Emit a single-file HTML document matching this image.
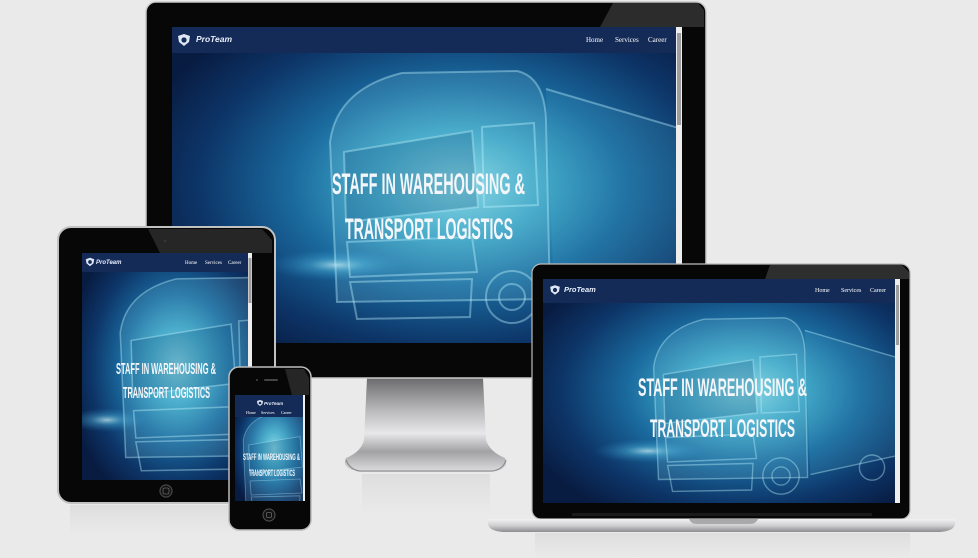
<!DOCTYPE html>
<html><head><meta charset="utf-8"><style>
html,body{margin:0;padding:0;background:#eaeaea;}
svg{display:block;}
text{font-family:"Liberation Sans Narrow","Liberation Sans",sans-serif;}
.nav{font-family:"Liberation Serif",serif;fill:#fff;}
.logo{font-family:"Liberation Sans",sans-serif;font-style:italic;font-weight:bold;fill:#e8eefc;}
.hero{font-weight:bold;fill:#f4f6fa;}
</style></head><body>
<svg width="978" height="558" viewBox="0 0 978 558" xmlns="http://www.w3.org/2000/svg">
<defs>
 <radialGradient id="hero" cx="0.56" cy="0.5" r="0.65">
  <stop offset="0" stop-color="#86d6e2"/>
  <stop offset="0.25" stop-color="#3fa6c6"/>
  <stop offset="0.5" stop-color="#1a6a9e"/>
  <stop offset="0.78" stop-color="#0d3568"/>
  <stop offset="1" stop-color="#081c42"/>
 </radialGradient>
 <radialGradient id="glow" cx="0.5" cy="0.5" r="0.5">
  <stop offset="0" stop-color="#d8fbff" stop-opacity="0.7"/>
  <stop offset="0.4" stop-color="#5fd0f0" stop-opacity="0.35"/>
  <stop offset="1" stop-color="#2a8fd0" stop-opacity="0"/>
 </radialGradient>
 <linearGradient id="stand" x1="0" y1="0" x2="0" y2="1">
  <stop offset="0" stop-color="#6b6b6d"/>
  <stop offset="0.35" stop-color="#b9b9bb"/>
  <stop offset="0.6" stop-color="#e8e8ea"/>
  <stop offset="0.8" stop-color="#a2a2a5"/>
  <stop offset="1" stop-color="#d8d8da"/>
 </linearGradient>
 <linearGradient id="base" x1="0" y1="0" x2="0" y2="1">
  <stop offset="0" stop-color="#f2f2f3"/>
  <stop offset="0.5" stop-color="#cfcfd1"/>
  <stop offset="1" stop-color="#8d8d90"/>
 </linearGradient>
 <linearGradient id="refl" x1="0" y1="0" x2="0" y2="1">
  <stop offset="0" stop-color="#d6d6d6"/>
  <stop offset="1" stop-color="#eaeaea"/>
 </linearGradient>
 <g id="shield"><path d="M-6,-4 L0,-6 L6,-4 L5,2 L0,6 L-5,2 Z" fill="#dfe6f5"/><circle r="2.6" fill="#142b57"/></g>
 <g id="truck" fill="none" stroke="#bff3ff" stroke-opacity="0.4" stroke-width="2">
  <path d="M165,275 L158,115 Q165,62 230,46 L345,44 Q372,50 374,92 L378,272 Z" fill="#9be6f2" fill-opacity="0.14"/>
  <path d="M172,125 L300,104 L306,180 L174,195 Z" fill="#0f4f80" fill-opacity="0.25"/>
  <path d="M310,100 L362,96 L366,178 L312,180 Z"/>
  <path d="M374,62 L510,102 L510,240 L382,268" fill="#5fc8e0" fill-opacity="0.12"/>
  <path d="M175,215 L300,210 L305,245 L178,250 Z"/>
  <path d="M178,255 L300,252 L298,290 L185,292 Z"/>
  <circle cx="340" cy="270" r="26"/>
  <circle cx="340" cy="270" r="13"/>
  <circle cx="470" cy="258" r="18"/>
 </g>
</defs>

<!-- reflections -->
<rect x="362" y="474" width="128" height="40" fill="url(#refl)" opacity="0.6"/>
<rect x="70" y="505" width="200" height="30" fill="url(#refl)" opacity="0.6"/>
<rect x="535" y="533" width="375" height="25" fill="url(#refl)" opacity="0.6"/>

<!-- MONITOR STAND -->
<path d="M367,378 L483,378 L486,440 Q490,452 505,458 Q509,466 500,470 L352,470 Q342,466 346,458 Q361,452 364,440 Z" fill="url(#stand)"/>
<path d="M346,460 Q350,470 360,471 L492,471 Q503,470 506,460" fill="none" stroke="#8a8a8c" stroke-width="1.2"/>

<!-- MONITOR -->
<rect x="146" y="2" width="560" height="376" rx="10" fill="#070707" stroke="#c9c9c9" stroke-width="1.5"/>
<polygon points="613,3 698,3 704,10 704,27 600,27" fill="#2c2c2c"/>
<svg x="172" y="27" width="510" height="316" viewBox="0 0 510 316">
 <rect width="510" height="316" fill="url(#hero)"/>
 <ellipse cx="165" cy="238" rx="70" ry="16" fill="url(#glow)"/>
 <use href="#truck"/>
</svg>
<rect x="172" y="27" width="510" height="26" fill="#142b57"/>
<rect x="676" y="27" width="6" height="316" fill="#eeeeee"/>
<rect x="677" y="33" width="4" height="92" fill="#9d9d9d"/>
<use href="#shield" x="184" y="40"/>
<text class="logo" x="196" y="42" font-size="8.5">ProTeam</text>
<text class="nav" x="586" y="42" font-size="7">Home</text>
<text class="nav" x="615" y="42" font-size="7">Services</text>
<text class="nav" x="648" y="42" font-size="7">Career</text>
<text class="hero" x="332" y="194" font-size="30" textLength="193" lengthAdjust="spacingAndGlyphs">STAFF IN WAREHOUSING &amp;</text>
<text class="hero" x="345" y="239" font-size="30" textLength="168" lengthAdjust="spacingAndGlyphs">TRANSPORT LOGISTICS</text>

<!-- TABLET -->
<rect x="58" y="227" width="217" height="276" rx="13" fill="#070707" stroke="#c2c2c2" stroke-width="2"/>
<polygon points="148,229 262,229 272,240 272,253 160,253" fill="#262626"/>
<circle cx="165" cy="241" r="1.5" fill="#333"/>
<svg x="82" y="253" width="170" height="227" viewBox="0 0 170 227">
 <rect width="170" height="227" fill="url(#hero)"/>
 <ellipse cx="25" cy="167" rx="40" ry="12" fill="url(#glow)"/>
 <use href="#truck" transform="translate(-85,-10) scale(0.78)"/>
</svg>
<rect x="82" y="253" width="170" height="19" fill="#142b57"/>
<rect x="248" y="253" width="4" height="227" fill="#eeeeee"/>
<rect x="248.5" y="258" width="3" height="45" fill="#9d9d9d"/>
<use href="#shield" transform="translate(90,262) scale(0.7)"/>
<text class="logo" x="96" y="264" font-size="6">ProTeam</text>
<text class="nav" x="185" y="264" font-size="5">Home</text>
<text class="nav" x="205" y="264" font-size="5">Services</text>
<text class="nav" x="228" y="264" font-size="5">Career</text>
<text class="hero" x="116" y="374" font-size="16" textLength="100" lengthAdjust="spacingAndGlyphs">STAFF IN WAREHOUSING &amp;</text>
<text class="hero" x="123" y="398" font-size="16" textLength="87" lengthAdjust="spacingAndGlyphs">TRANSPORT LOGISTICS</text>
<circle cx="166" cy="491" r="6" fill="#111" stroke="#4a4a4a" stroke-width="1.2"/>
<rect x="163" y="488" width="6" height="6" rx="1.5" fill="none" stroke="#666" stroke-width="0.8"/>

<!-- PHONE -->
<rect x="229" y="367" width="82" height="163" rx="10" fill="#070707" stroke="#bdbdbd" stroke-width="1.5"/>
<polygon points="285,369 304,369 309,378 309,395 292,395" fill="#262626"/>
<rect x="264" y="379" width="14" height="2" rx="1" fill="#444"/>
<circle cx="257" cy="380" r="1" fill="#444"/>
<svg x="235" y="395" width="70" height="106" viewBox="0 0 70 106">
 <rect width="70" height="106" fill="url(#hero)"/>
 <use href="#truck" transform="translate(-55,0) scale(0.4)"/>
</svg>
<rect x="235" y="395" width="70" height="22" fill="#142b57"/>
<rect x="303" y="395" width="2" height="106" fill="#eeeeee"/>
<use href="#shield" transform="translate(260,403) scale(0.5)"/>
<text class="logo" x="264" y="405" font-size="4.5">ProTeam</text>
<text class="nav" x="246" y="414" font-size="4">Home</text>
<text class="nav" x="261" y="414" font-size="4">Services</text>
<text class="nav" x="281" y="414" font-size="4">Career</text>
<text class="hero" x="243" y="460" font-size="9.5" textLength="57" lengthAdjust="spacingAndGlyphs">STAFF IN WAREHOUSING &amp;</text>
<text class="hero" x="249" y="476" font-size="9.5" textLength="46" lengthAdjust="spacingAndGlyphs">TRANSPORT LOGISTICS</text>
<circle cx="269" cy="515" r="6" fill="#111" stroke="#4a4a4a" stroke-width="1.2"/>
<rect x="266.5" y="512.5" width="5" height="5" rx="1.2" fill="none" stroke="#666" stroke-width="0.8"/>

<!-- LAPTOP -->
<rect x="532" y="264" width="378" height="255" rx="9" fill="#070707" stroke="#bcbcbc" stroke-width="1.2"/>
<polygon points="770,265 902,265 909,272 909,279 765,279" fill="#2e2e2e"/>
<svg x="543" y="279" width="357" height="224" viewBox="0 0 357 224">
 <rect width="357" height="224" fill="url(#hero)"/>
 <ellipse cx="105" cy="172" rx="55" ry="12" fill="url(#glow)"/>
 <use href="#truck" transform="translate(0,8) scale(0.7)"/>
</svg>
<rect x="543" y="279" width="357" height="24" fill="#142b57"/>
<rect x="895" y="279" width="5" height="224" fill="#eeeeee"/>
<rect x="896" y="285" width="3" height="60" fill="#9d9d9d"/>
<use href="#shield" transform="translate(555,290) scale(0.8)"/>
<text class="logo" x="564" y="292" font-size="7.5">ProTeam</text>
<text class="nav" x="815" y="292" font-size="6">Home</text>
<text class="nav" x="841" y="292" font-size="6">Services</text>
<text class="nav" x="870" y="292" font-size="6">Career</text>
<text class="hero" x="638" y="396" font-size="25" textLength="169" lengthAdjust="spacingAndGlyphs">STAFF IN WAREHOUSING &amp;</text>
<text class="hero" x="650" y="437" font-size="25" textLength="145" lengthAdjust="spacingAndGlyphs">TRANSPORT LOGISTICS</text>
<rect x="572" y="513" width="300" height="3" fill="#1a1a1a"/>
<path d="M488,519 L955,519 L955,524 Q954,531 940,532 L503,532 Q489,531 488,524 Z" fill="url(#base)"/>
<path d="M689,519 L758,519 Q756,524 750,524 L697,524 Q691,524 689,519 Z" fill="#a9a9ab"/>
</svg>
</body></html>
